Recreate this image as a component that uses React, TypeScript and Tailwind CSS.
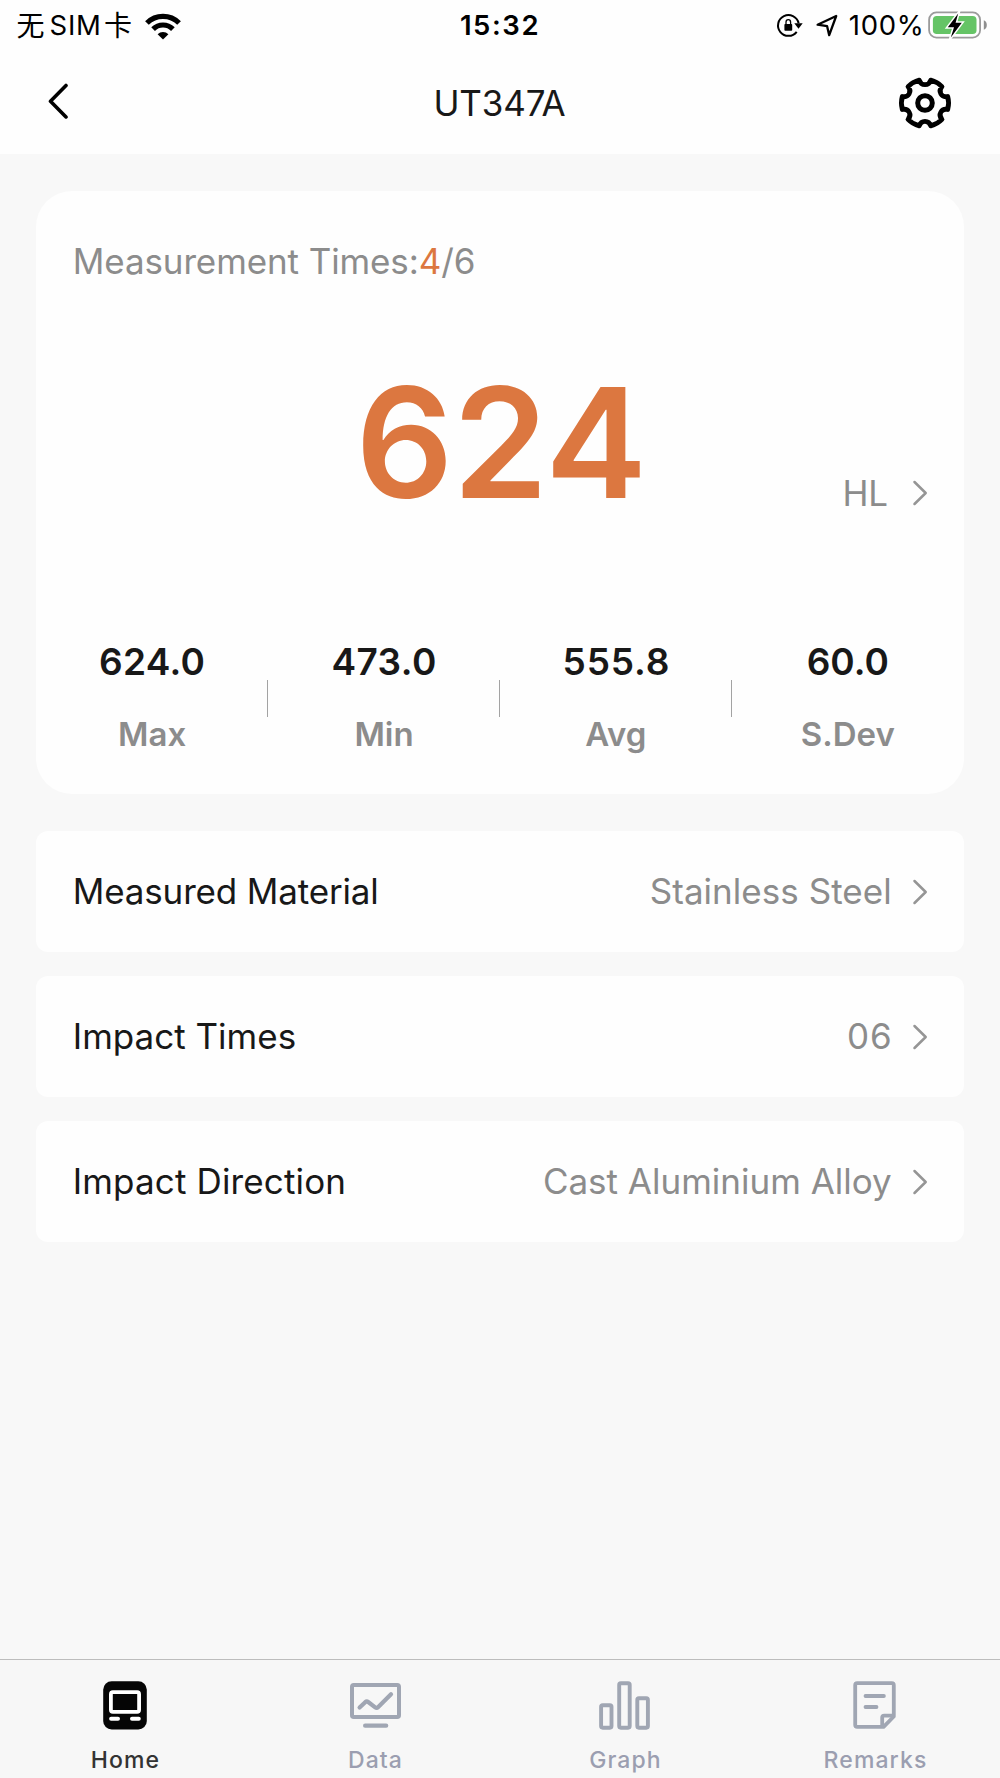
import type { ReactNode } from "react";

function WifiIcon() {
  return (
    <svg className="mb-[5px] ml-[12px] h-[40px] w-[38px]" viewBox="0 0 38 40" fill="none">
      <path d="M2.95 20A22.7 22.7 0 0 1 35.05 20" stroke="#000" strokeWidth="5.2" />
      <path d="M9.1 26.1A14 14 0 0 1 28.9 26.1" stroke="#000" strokeWidth="5.2" />
      <path d="M19 36.6L13.6 31.2A7.8 7.8 0 0 1 24.4 31.2Z" fill="#000" />
    </svg>
  );
}

function RotationLockIcon() {
  return (
    <svg className="h-[30px] w-[30px]" viewBox="0 0 30 30" fill="none">
      <path d="M22.7 21.8A10.4 10.4 0 1 1 24.6 13.2" stroke="#000" strokeWidth="2" />
      <path d="M20.3 13.2H28.7L24.5 18.8Z" fill="#000" />
      <rect x="10.4" y="14" width="7.8" height="6.8" rx="0.8" fill="#000" />
      <path d="M12 14.5V12.2a2.3 2.5 0 0 1 4.6 0V14.5" stroke="#000" strokeWidth="1.3" />
    </svg>
  );
}

function LocationIcon() {
  return (
    <svg className="h-[24px] w-[24px]" viewBox="0 0 24 24" fill="none">
      <path d="M21.2 3L2.6 11.7L12.1 13.2L14.2 22.2Z" stroke="#000" strokeWidth="2.3" strokeLinejoin="round" />
    </svg>
  );
}

function BatteryIcon() {
  return (
    <svg className="mb-[1px] h-[32px] w-[62px]" viewBox="0 0 62 32" fill="none">
      <rect x="2.1" y="3.4" width="51" height="25.2" rx="7.4" stroke="#9b9b9b" strokeWidth="1.8" />
      <rect x="5.9" y="7" width="43.6" height="18" rx="3.8" fill="#65c466" />
      <path d="M56.8 11.2q3 1.2 3 4.8t-3 4.8Z" fill="#8f8f8f" />
      <path
        d="M31.2 4.6L20.8 18.2H27L23.8 28.4L34.8 13.8H28.6Z"
        fill="#000"
        stroke="#fff"
        strokeWidth="3"
        strokeMiterlimit="6"
        paintOrder="stroke"
      />
    </svg>
  );
}

function point(cx: number, cy: number, r: number, deg: number) {
  const a = (deg * Math.PI) / 180;
  return `${(cx + r * Math.sin(a)).toFixed(2)} ${(cy - r * Math.cos(a)).toFixed(2)}`;
}

/* Six rounded teeth separated by concave notches. */
function gearPath() {
  let d = `M${point(28, 28, 23.6, -14)}`;
  for (let i = 0; i < 6; i++) {
    const a = i * 60;
    d += `C${point(28, 28, 17.2, a - 13)} ${point(28, 28, 17.2, a + 13)} ${point(28, 28, 23.6, a + 14)}`;
    d += `A24 24 0 0 1 ${point(28, 28, 23.6, a + 46)}`;
  }
  return d + "Z";
}

function GearIcon() {
  return (
    <svg className="mt-[2px] h-[56px] w-[56px]" viewBox="0 0 56 56" fill="none" stroke="#000">
      <path d={gearPath()} strokeWidth="4.8" strokeLinejoin="round" />
      <circle cx="28" cy="28" r="7.3" strokeWidth="5" />
    </svg>
  );
}

function Chevron() {
  return (
    <svg className="ml-[20px] h-[28px] w-[16px]" viewBox="0 0 16 28" fill="none">
      <path d="M2.5 3L13.7 14L2.5 25" stroke="#959595" strokeWidth="2.5" strokeLinecap="round" strokeLinejoin="round" />
    </svg>
  );
}

function StatusBar() {
  return (
    <div className="grid h-[50px] grid-cols-3 items-center text-[27.5px] leading-[50px] text-black">
      <div className="flex items-center pl-[16.5px]">
        <span className="mb-[2px] w-[33px] font-['Noto_Sans_CJK_SC',sans-serif] text-[28px] leading-[48px]">无</span>
        <span className="w-[54.5px] tracking-[0.74px]">SIM</span>
        <span className="mb-[2px] w-[28px] font-['Noto_Sans_CJK_SC',sans-serif] text-[28px] leading-[48px]">卡</span>
        <WifiIcon />
      </div>
      <div className="text-center font-semibold tracking-[1.58px]">15:32</div>
      <div className="flex items-center justify-end pr-[11.5px]">
        <RotationLockIcon />
        <span className="mr-[10px] ml-[11px]">
          <LocationIcon />
        </span>
        <span className="mr-[2px] tracking-[0.7px]">100%</span>
        <BatteryIcon />
      </div>
    </div>
  );
}

function NavBar() {
  return (
    <div className="grid h-[104px] grid-cols-3 items-center pr-[46.5px] pb-[1px] pl-[45.5px]">
      <svg className="h-[38px] w-[24px]" viewBox="0 0 24 38" fill="none">
        <path d="M20 2.5L4.5 18.2L20 33.9" stroke="#000" strokeWidth="3.6" strokeLinecap="round" strokeLinejoin="round" />
      </svg>
      <h1 className="pt-[3px] text-center text-[35px] leading-[40px] tracking-[-0.18px] text-[#181818]">UT347A</h1>
      <div className="flex justify-end">
        <GearIcon />
      </div>
    </div>
  );
}

function Stat({ value, label, last }: { value: ReactNode; label: string; last?: boolean }) {
  return (
    <div className="flex items-center">
      <div className="flex flex-1 flex-col items-center gap-[32px] font-semibold leading-[40px]">
        <span className="text-[37px] text-[#181818]">{value}</span>
        <span className="text-[33px] text-[#8c8c8c]">{label}</span>
      </div>
      {!last && <div className="-ml-px h-[37px] w-px bg-[#a3a3a3]" />}
    </div>
  );
}

function Row({ label, value }: { label: ReactNode; value: ReactNode }) {
  return (
    <div className="flex h-[121px] items-center rounded-[12px] bg-[#fefefe] pr-[36px] pl-[36.5px] text-[35px] leading-[40px]">
      <span className="mb-[2px] text-[#181818]">{label}</span>
      <span className="mb-[2px] ml-auto text-[#8c8c8c]">{value}</span>
      <Chevron />
    </div>
  );
}

function HomeIcon() {
  return (
    <svg className="h-[56px] w-[56px]" viewBox="0 0 56 56" fill="none">
      <rect x="6.2" y="4.2" width="43.6" height="48.3" rx="8.5" fill="#050505" />
      <rect x="13.9" y="15.2" width="28.2" height="19.6" rx="2" stroke="#fff" strokeWidth="3.8" />
      <path d="M14.1 41.7H21M35 41.7H41.8" stroke="#fff" strokeWidth="4" strokeLinecap="round" />
    </svg>
  );
}

function DataIcon() {
  return (
    <svg className="h-[56px] w-[56px]" viewBox="0 0 56 56" fill="none" stroke="#a0a6b3" strokeLinecap="round" strokeLinejoin="round">
      <rect x="5" y="8" width="47" height="32" rx="1.8" strokeWidth="4" />
      <path d="M12.6 30.5L18.2 25.2Q19.7 23.9 21.2 25L28.2 30.4Q29.7 31.5 31 30.2L44 17.2" strokeWidth="4.2" />
      <path d="M18.1 48.7H39.2" strokeWidth="4.2" />
    </svg>
  );
}

function GraphIcon() {
  return (
    <svg className="h-[56px] w-[56px]" viewBox="0 0 56 56" fill="none" stroke="#a0a6b3" strokeWidth="3.9">
      <rect x="4.1" y="28.2" width="10.4" height="22.5" rx="1.6" />
      <rect x="22.2" y="6.2" width="10.5" height="44.5" rx="1.6" />
      <rect x="40.3" y="21.3" width="10.6" height="29.4" rx="1.6" />
    </svg>
  );
}

function RemarksIcon() {
  return (
    <svg className="h-[56px] w-[56px]" viewBox="0 0 56 56" fill="none" stroke="#a0a6b3" strokeWidth="3.8" strokeLinecap="round" strokeLinejoin="round">
      <path d="M10.2 6.2H44.8a2 2 0 0 1 2 2V39.5L36.6 49.8H10.2a2 2 0 0 1-2-2V8.2a2 2 0 0 1 2-2Z" />
      <path d="M35.2 49V40.7a2 2 0 0 1 2-2H46" />
      <path d="M18.5 19H36.9M18.5 30H29.5" />
    </svg>
  );
}

function Tab({ icon, label, active }: { icon: ReactNode; label: string; active?: boolean }) {
  return (
    <div className="flex flex-col items-center pt-[17px]">
      {icon}
      <span
        className={
          active
            ? "mt-[12px] pl-px text-[23px] leading-[30px] font-[450] tracking-[1.1px] text-[#333333]"
            : "mt-[12px] pl-px text-[23px] leading-[30px] font-[450] tracking-[1.1px] text-[#9b9eb0]"
        }
      >
        {label}
      </span>
    </div>
  );
}

export default function App() {
  return (
    <div className="flex h-[1778px] w-[1000px] flex-col overflow-hidden bg-[#f8f8f8] font-['Inter','Noto_Sans_CJK_SC',sans-serif]">
      <header className="bg-[#fefefe]">
        <StatusBar />
        <NavBar />
      </header>

      <main className="flex-1 px-[36.25px] pt-[37px]">
        <section className="rounded-[36px] bg-[#fefefe] pt-[50px] pb-[40px]">
          <p className="pl-[36.5px] text-[35px] leading-[40px] tracking-[-0.11px] text-[#8c8c8c]">
            Measurement Times:<span className="text-[#dc7740]">4</span>/6
          </p>
          <div className="mt-[86px] grid grid-cols-[1fr_auto_1fr] items-end">
            <span className="col-start-2 pl-[2px] text-[153px] leading-[152px] font-semibold tracking-[-0.5px] text-[#dc7740]">
              624
            </span>
            <div className="flex items-center justify-end pr-[36px] text-[35px] leading-[52px] text-[#8c8c8c]">
              <span className="mr-[4px] tracking-[-0.3px]">HL</span>
              <Chevron />
            </div>
          </div>
          <div className="mt-[123px] grid grid-cols-4">
            <Stat value={<span className="tracking-[0.3px]">624.0</span>} label="Max" />
            <Stat value={<span className="tracking-[0.4px]">473.0</span>} label="Min" />
            <Stat value={<span className="pl-[1px] tracking-[0.9px]">555.8</span>} label="Avg" />
            <Stat value="60.0" label="S.Dev" last />
          </div>
        </section>

        <section className="mt-[37px] flex flex-col gap-[24px]">
          <Row label={<span className="tracking-[-0.16px]">Measured Material</span>} value={<span className="tracking-[0.04px]">Stainless Steel</span>} />
          <Row label="Impact Times" value={<span className="-mr-[1px] tracking-[1px]">06</span>} />
          <Row label={<span className="tracking-[0.14px]">Impact Direction</span>} value="Cast Aluminium Alloy" />
        </section>
      </main>

      <nav className="grid h-[119px] grid-cols-4 border-t border-[#bdbdbd] bg-[#f7f7f7]">
        <Tab icon={<HomeIcon />} label="Home" active />
        <Tab icon={<DataIcon />} label="Data" />
        <Tab icon={<GraphIcon />} label="Graph" />
        <Tab icon={<RemarksIcon />} label="Remarks" />
      </nav>
    </div>
  );
}
